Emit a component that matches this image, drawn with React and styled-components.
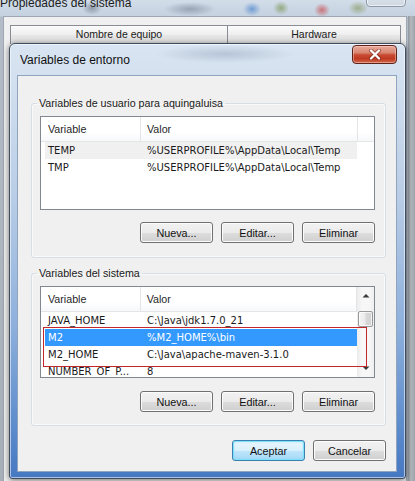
import React from "react";
import styled, { createGlobalStyle } from "styled-components";

const GlobalStyle = createGlobalStyle`
  html, body { margin: 0; padding: 0; }
  body {
    width: 415px;
    height: 481px;
    overflow: hidden;
    background: #b9c2cc;
    font-family: "Liberation Sans", Arial, sans-serif;
  }
  * { box-sizing: border-box; }
`;

const Screen = styled.div`
  position: relative;
  width: 415px;
  height: 481px;
  overflow: hidden;
  background:
    linear-gradient(to right, transparent 0, transparent 408px, #8f959c 408px, #b4b9bf 411px, #9ca2a9 415px),
    linear-gradient(to bottom, #c6d3e2 0, #c9d5e3 16px, #b3bcc7 17px, #a7aeb7 100%);
`;

/* ---------- parent window (behind) ---------- */
const ParentWindow = styled.div`
  display: flex;
  flex-direction: column;
  height: 100%;
`;

const ParentTitleBar = styled.div`
  height: 16px;
  display: flex;
  justify-content: space-between;
  align-items: flex-start;
  background:
    radial-gradient(ellipse 10px 7px at 92px 8px, rgba(70, 80, 95, 0.45), transparent),
    radial-gradient(ellipse 26px 7px at 190px 9px, rgba(60, 70, 90, 0.35), transparent),
    radial-gradient(ellipse 9px 7px at 252px 9px, rgba(40, 110, 200, 0.55), transparent),
    radial-gradient(ellipse 8px 7px at 281px 8px, rgba(110, 140, 60, 0.6), transparent),
    radial-gradient(ellipse 8px 7px at 322px 10px, rgba(200, 50, 50, 0.6), transparent),
    radial-gradient(ellipse 10px 7px at 358px 8px, rgba(120, 140, 70, 0.55), transparent),
    linear-gradient(to bottom, #d2dde9, #c4d1e0);
`;

const ParentTitle = styled.span`
  font-size: 12px;
  line-height: 14px;
  margin-top: -4px;
  color: #1c1c1c;
  white-space: nowrap;
`;

const ParentClose = styled.div`
  width: 40px;
  height: 18px;
  margin-top: -11px;
  margin-right: 9px;
  border: 1px solid #8f99a6;
  border-radius: 4px;
  background: linear-gradient(to bottom, #e3e9f0, #cfd8e3);
  box-shadow: inset 0 0 0 1px rgba(255, 255, 255, 0.6);
`;

const ParentBody = styled.div`
  flex: 1;
  margin: 0 8px 0 3px;
  padding: 8px 0 0 6px;
  background: #f0f0f0;
  border: 1px solid #9ea8b4;
  border-bottom: none;
`;

const TabStrip = styled.div`
  display: flex;
`;

const Tab = styled.div`
  width: ${(p) => p.$w}px;
  height: 19px;
  border: 1px solid #898c95;
  border-left-width: ${(p) => (p.$first ? 1 : 0)}px;
  border-bottom: none;
  background: linear-gradient(to bottom, #fbfbfb, #eeeeee 50%, #e6e6e6 51%, #e2e2e2);
  font-size: 10.5px;
  line-height: 17px;
  text-align: center;
  color: #1a1a1a;
`;

/* ---------- dialog ---------- */
const Dialog = styled.div`
  position: absolute;
  left: 9px;
  top: 43px;
  width: 397px;
  height: 436px;
  display: flex;
  flex-direction: column;
  border: 1px solid #3e4c60;
  border-radius: 6px 6px 3px 3px;
  background:
    radial-gradient(ellipse 70px 9px at 215px 10px, rgba(120, 140, 165, 0.35), transparent),
    linear-gradient(to bottom, #d9e5f2 0, #d3e0ef 8%, #b9cde6 35%, #8eb0dc 65%, #5d8ccc 88%, #4678c2 100%);
  box-shadow: inset 0 0 0 1px rgba(255, 255, 255, 0.55), 0 1px 6px rgba(0, 0, 0, 0.55);
`;

const DialogTitleBar = styled.div`
  height: 31px;
  flex: none;
  display: flex;
  justify-content: space-between;
  align-items: flex-start;
`;

const DialogTitle = styled.span`
  margin-top: 9px;
  padding-left: 10px;
  font-size: 12px;
  line-height: 14px;
  color: #111;
`;

const CloseButton = styled.div`
  width: 45px;
  height: 19px;
  margin-top: 1px;
  margin-right: 8px;
  display: flex;
  align-items: center;
  justify-content: center;
  border: 1px solid #5d2219;
  border-radius: 4px;
  background: linear-gradient(
    to bottom,
    #e9aa9c 0%,
    #d98672 40%,
    #c84b32 52%,
    #c03a22 75%,
    #d16a4e 100%
  );
  box-shadow: inset 0 0 0 1px rgba(255, 220, 210, 0.45);
`;

const Client = styled.div`
  flex: 1;
  margin: 0 8px 6px 7px;
  padding: 20px 10px 0 13px;
  background: #f0f0f0;
  border: 1px solid #8fa4be;
  display: flex;
  flex-direction: column;
`;

const Group = styled.fieldset`
  margin: ${(p) => p.$mt || 0}px 0 0 0;
  padding: 6px 10px ${(p) => p.$pb}px 8px;
  min-width: 0;
  border: 1px solid #d5dfe5;
  border-radius: 3px;
  box-shadow: inset 0 0 0 1px rgba(255, 255, 255, 0.6);
`;

const Legend = styled.legend`
  margin-left: -3px;
  padding: 0 2px;
  font-size: 10.7px;
  line-height: 14px;
  color: #1a1a1a;
`;

const ListBox = styled.div`
  position: relative;
  height: ${(p) => p.$h}px;
  display: flex;
  background: #fff;
  border: 1px solid #828790;
  overflow: hidden;
`;

const Table = styled.div`
  flex: 1;
  min-width: 0;
`;

const Header = styled.div`
  display: flex;
  height: 25px;
  border-bottom: 1px solid #e5e5e5;
  background: linear-gradient(to bottom, #ffffff 60%, #f7f8fa);
`;

const HeaderCell = styled.div`
  width: ${(p) => p.$w}px;
  padding-left: ${(p) => p.$pl}px;
  border-right: 1px solid #e3e5e8;
  font-size: 10.7px;
  line-height: 24px;
  color: #262626;
  white-space: nowrap;
`;

const HeaderFiller = styled.div`
  flex: 1;
`;

const Row = styled.div`
  display: flex;
  width: 312px;
  height: 17px;
  margin-left: 4px;
  background: ${(p) => (p.$selected ? "#3399ff" : p.$hover ? "#f0f0f0" : "transparent")};
  color: ${(p) => (p.$selected ? "#ffffff" : "#1a1a1a")};
  font-family: "DejaVu Sans", Verdana, sans-serif;
  font-size: 10px;
  line-height: 17px;
  white-space: nowrap;
`;

const Cell = styled.div`
  width: ${(p) => (p.$w ? `${p.$w}px` : "auto")};
  flex: ${(p) => (p.$w ? "none" : 1)};
  padding-left: 3px;
  overflow: hidden;
`;

const ScrollBar = styled.div`
  width: 17px;
  flex: none;
  display: flex;
  flex-direction: column;
  background: linear-gradient(to right, #ececec, #f7f7f7 30%, #f7f7f7 70%, #efefef);
`;

const ArrowButton = styled.div`
  height: 17px;
  display: flex;
  align-items: center;
  justify-content: center;
`;

const Thumb = styled.div`
  height: 16px;
  margin: 7px 1px 0 1px;
  border: 1px solid #999;
  border-radius: 2px;
  background: linear-gradient(to right, #f5f5f5, #ebebeb 45%, #d9d9d9 55%, #d2d2d2);
  box-shadow: inset 0 0 0 1px rgba(255, 255, 255, 0.7);
`;

const Track = styled.div`
  flex: 1;
`;

const Annotation = styled.div`
  position: absolute;
  left: 2px;
  top: 40px;
  width: 324px;
  height: 40px;
  border: 1px solid #c3272d;
  pointer-events: none;
`;

const ButtonRow = styled.div`
  display: flex;
  justify-content: flex-end;
  gap: 8px;
  margin-top: ${(p) => p.$mt}px;
`;

const Button = styled.div`
  width: 73px;
  height: 21px;
  display: flex;
  align-items: center;
  justify-content: center;
  border: 1px solid ${(p) => (p.$default ? "#3c7fb1" : "#707070")};
  border-radius: 3px;
  background: ${(p) =>
    p.$default
      ? "linear-gradient(to bottom, #eaf6fd 0%, #d9f0fc 50%, #bee6fd 51%, #a7d9f5 100%)"
      : "linear-gradient(to bottom, #f2f2f2 0%, #ebebeb 50%, #dddddd 51%, #cfcfcf 100%)"};
  box-shadow: ${(p) =>
    p.$default
      ? "inset 0 0 0 1px #7fe2fb, inset 0 0 3px rgba(80, 200, 250, 0.6)"
      : "inset 0 0 0 1px #fcfcfc"};
  font-size: 10.8px;
  color: #111;
`;

const Footer = styled.div`
  display: flex;
  justify-content: flex-end;
  gap: 8px;
  margin-top: 14px;
`;

const UpArrow = () => (
  <svg width="8" height="5" viewBox="0 0 8 5">
    <path d="M0.5 4.5 L4 1 L7.5 4.5 Z" fill="#3a3a3a" />
  </svg>
);

const DownArrow = () => (
  <svg width="8" height="5" viewBox="0 0 8 5">
    <path d="M0.5 0.5 L4 4 L7.5 0.5 Z" fill="#3a3a3a" />
  </svg>
);

const CloseGlyph = () => (
  <svg width="14" height="11" viewBox="0 0 14 11">
    <path d="M3 1.5 L11 9.5 M11 1.5 L3 9.5" stroke="#6a1d12" strokeOpacity="0.55" strokeWidth="4" strokeLinecap="round" />
    <path d="M3 1.5 L11 9.5 M11 1.5 L3 9.5" stroke="#ffffff" strokeWidth="2.3" strokeLinecap="round" />
  </svg>
);

const userVars = [
  { name: "TEMP", value: "%USERPROFILE%\\AppData\\Local\\Temp", hover: true },
  { name: "TMP", value: "%USERPROFILE%\\AppData\\Local\\Temp" },
];

const systemVars = [
  { name: "JAVA_HOME", value: "C:\\Java\\jdk1.7.0_21" },
  { name: "M2", value: "%M2_HOME%\\bin", selected: true },
  { name: "M2_HOME", value: "C:\\Java\\apache-maven-3.1.0" },
  { name: "NUMBER_OF_P...", value: "8" },
];

const VarTable = ({ rows }) => (
  <Table>
    <Header>
      <HeaderCell $w={100} $pl={7}>Variable</HeaderCell>
      <HeaderCell $w={217} $pl={6}>Valor</HeaderCell>
      <HeaderFiller />
    </Header>
    {rows.map((r) => (
      <Row key={r.name} $selected={r.selected} $hover={r.hover}>
        <Cell $w={99}>{r.name}</Cell>
        <Cell>{r.value}</Cell>
      </Row>
    ))}
  </Table>
);

const ActionButtons = ({ mt }) => (
  <ButtonRow $mt={mt}>
    <Button>Nueva...</Button>
    <Button>Editar...</Button>
    <Button>Eliminar</Button>
  </ButtonRow>
);

export default function App() {
  return (
    <>
      <GlobalStyle />
      <Screen>
        <ParentWindow>
          <ParentTitleBar>
            <ParentTitle>Propiedades del sistema</ParentTitle>
            <ParentClose />
          </ParentTitleBar>
          <ParentBody>
            <TabStrip>
              <Tab $w={218} $first>Nombre de equipo</Tab>
              <Tab $w={173}>Hardware</Tab>
            </TabStrip>
          </ParentBody>
        </ParentWindow>

        <Dialog>
          <DialogTitleBar>
            <DialogTitle>Variables de entorno</DialogTitle>
            <CloseButton>
              <CloseGlyph />
            </CloseButton>
          </DialogTitleBar>
          <Client>
            <Group $pb={14}>
              <Legend>Variables de usuario para aquingaluisa</Legend>
              <ListBox $h={94}>
                <VarTable rows={userVars} />
              </ListBox>
              <ActionButtons mt={12} />
            </Group>

            <Group $mt={8} $pb={13}>
              <Legend>Variables del sistema</Legend>
              <ListBox $h={92}>
                <VarTable rows={systemVars} />
                <ScrollBar>
                  <ArrowButton>
                    <UpArrow />
                  </ArrowButton>
                  <Thumb />
                  <Track />
                  <ArrowButton>
                    <DownArrow />
                  </ArrowButton>
                </ScrollBar>
                <Annotation />
              </ListBox>
              <ActionButtons mt={13} />
            </Group>

            <Footer>
              <Button $default>Aceptar</Button>
              <Button>Cancelar</Button>
            </Footer>
          </Client>
        </Dialog>
      </Screen>
    </>
  );
}
